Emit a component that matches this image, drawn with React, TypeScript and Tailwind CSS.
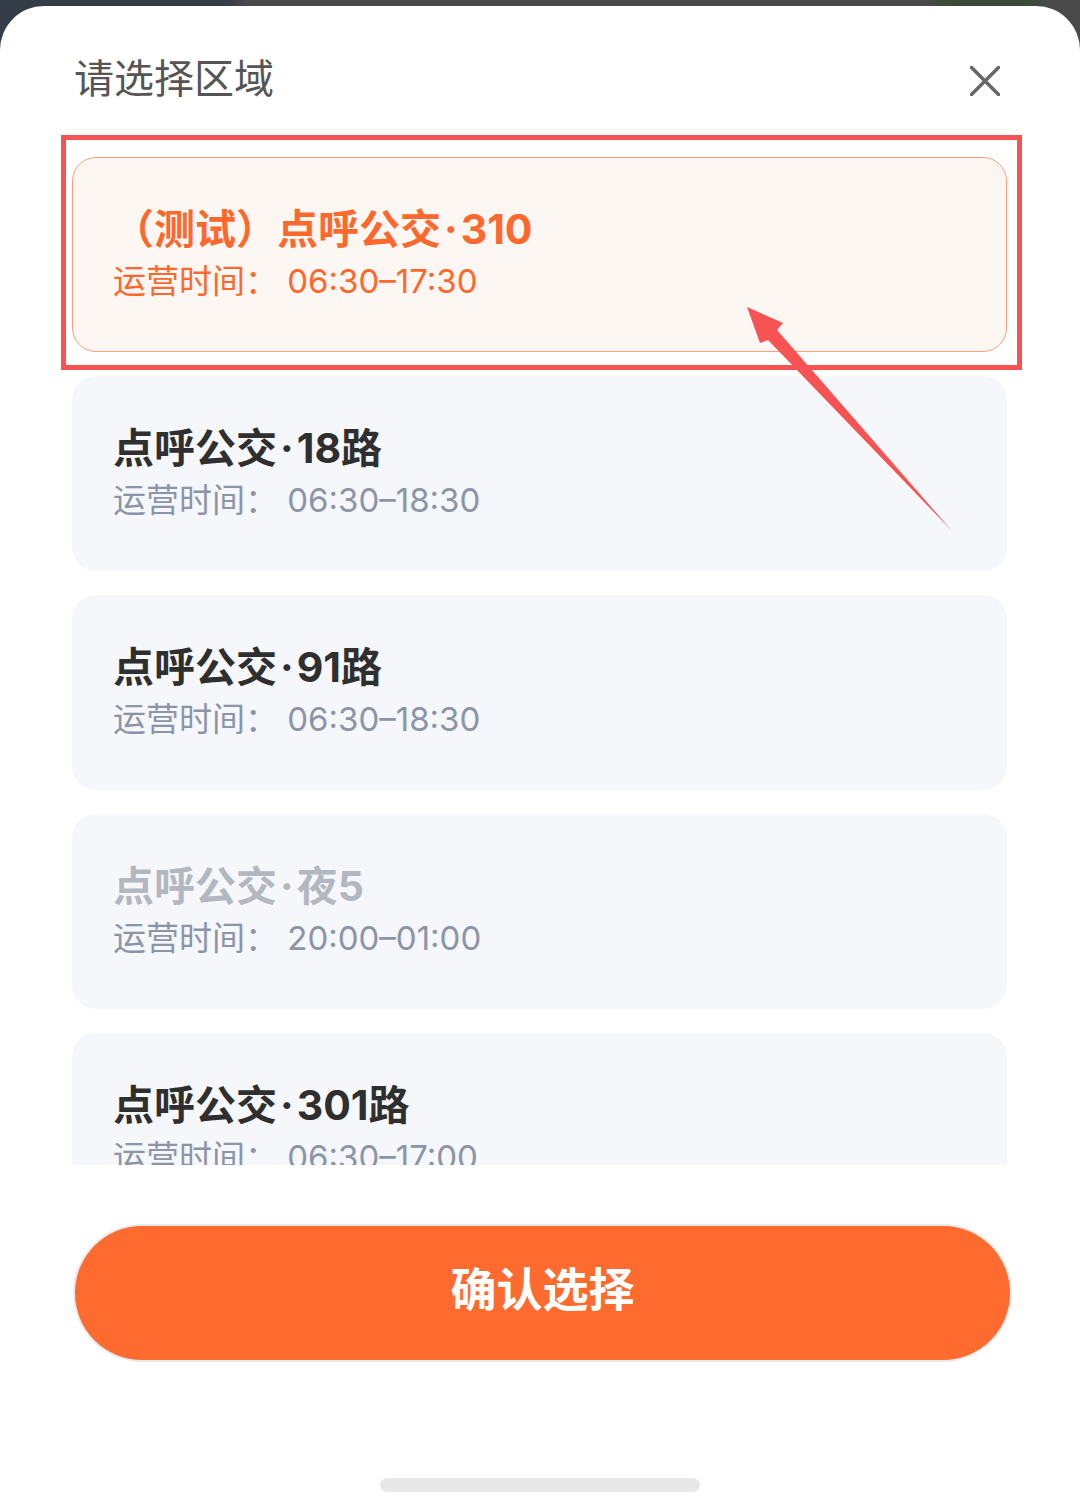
import React from "react";

type Item = { pre: string; post: string; time: string; state: "selected" | "normal" | "disabled" };

const items: Item[] = [
  { pre: "（测试）点呼公交", post: "310", time: "06:30–17:30", state: "selected" },
  { pre: "点呼公交", post: "18路", time: "06:30–18:30", state: "normal" },
  { pre: "点呼公交", post: "91路", time: "06:30–18:30", state: "normal" },
  { pre: "点呼公交", post: "夜5", time: "20:00–01:00", state: "disabled" },
  { pre: "点呼公交", post: "301路", time: "06:30–17:00", state: "normal" },
];

function Card({ item }: { item: Item }) {
  const selected = item.state === "selected";
  const disabled = item.state === "disabled";
  return (
    <div
      className={
        selected
          ? "shrink-0 h-[195px] rounded-[24px] bg-[#fdf7f3] border border-[#f8a07c] flex flex-col justify-center pl-[40px]"
          : "shrink-0 h-[195px] rounded-[24px] bg-[#f6f7fb] flex flex-col justify-center pl-[41px]"
      }
    >
      <div
        className={
          selected
            ? "text-[41px] leading-[50px] font-bold text-[#ff682c] whitespace-nowrap"
            : disabled
            ? "text-[41px] leading-[50px] font-bold text-[#b3b7bf] whitespace-nowrap"
            : "text-[41px] leading-[50px] font-bold text-[#2f2f2f] whitespace-nowrap"
        }
      >
        {item.pre}
        <span className="px-[3px]">·</span>
        {item.post}
      </div>
      <div
        className={
          selected
            ? "mt-[2px] text-[33px] leading-[50px] text-[#ff682c] whitespace-nowrap"
            : "mt-[2px] text-[33px] leading-[50px] text-[#8b95a7] whitespace-nowrap"
        }
      >
        运营时间： {item.time}
      </div>
    </div>
  );
}

export default function App() {
  return (
    <div className="relative w-[1080px] h-[1508px] overflow-hidden bg-[linear-gradient(90deg,#343c47_0%,#343c47_21%,#4a4a4a_23%,#4a4a4a_86%,#3a4a37_88%,#3a4a37_95%,#4a4a4a_97%)] font-['Inter','Noto_Sans_CJK_SC',sans-serif]">
      <div className="h-[6px]" />
      <div className="h-[1502px] bg-white rounded-t-[44px] flex flex-col">
        <div className="flex items-center justify-between pl-[74px] pr-[80px] pt-[48px] pb-[2px]">
          <div className="text-[40px] leading-[50px] text-[#555555]">请选择区域</div>
          <svg width="30" height="30" viewBox="0 0 30 30" className="mt-[3px]">
            <path d="M1.5 1.5 L28.5 28.5 M28.5 1.5 L1.5 28.5" stroke="#666666" strokeWidth="3.5" strokeLinecap="round" />
          </svg>
        </div>
        <div className="mt-[51px] ml-[72px] w-[935px] h-[1008px] overflow-hidden flex flex-col gap-[24px]">
          {items.map((it, i) => (
            <Card key={i} item={it} />
          ))}
        </div>
        <button className="mt-[61px] ml-[75px] w-[935px] h-[134px] rounded-full bg-[#ff6a2e] ring-2 ring-[#e9e9ec] text-white text-[46px] font-bold leading-none flex items-center justify-center pb-[9px]">
          确认选择
        </button>
        <div className="mt-[118px] mx-auto w-[320px] h-[14px] rounded-full bg-[#e8e8e8]" />
      </div>

      {/* annotation overlay */}
      <div className="absolute left-[61px] top-[135px] w-[961px] h-[235px] border-[5px] border-[#f75353] pointer-events-none" />
      <svg className="absolute left-0 top-0 pointer-events-none" width="1080" height="1508" viewBox="0 0 1080 1508">
        <polygon points="747,307 783,323 777,330 952,531 768,340 760,343" fill="#f75353" />
      </svg>
    </div>
  );
}
